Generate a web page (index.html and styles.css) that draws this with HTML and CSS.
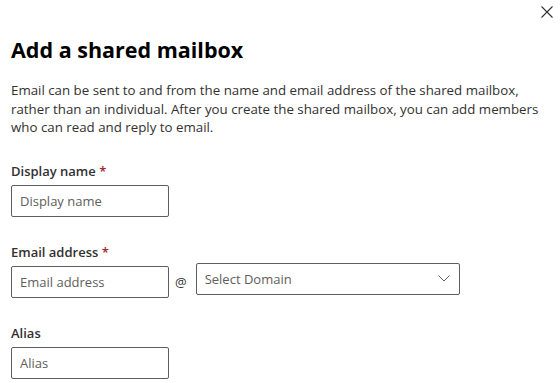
FILE: index.html
```html
<!DOCTYPE html>
<html lang="en">
<head>
<meta charset="utf-8">
<title>Add a shared mailbox</title>
<link rel="stylesheet" href="styles.css">
</head>
<body>
<div class="panel">
  <div class="topbar">
    <button class="close" aria-label="Close">
      <svg width="12" height="12" viewBox="0 0 12 12"><path d="M0.5 0.5 L11.5 11.5 M11.5 0.5 L0.5 11.5" stroke="#323130" stroke-width="1.1" fill="none"/></svg>
    </button>
  </div>
  <h1 class="title">Add a shared mailbox</h1>
  <p class="desc">Email can be sent to and from the name and email address of the shared mailbox, rather than an individual. After you create the shared mailbox, you can add members who can read and reply to email.</p>
  <div class="field">
    <label class="label">Display name <span class="req">*</span></label>
    <input class="input" type="text" placeholder="Display name">
  </div>
  <div class="field">
    <label class="label label-tight">Email address <span class="req">*</span></label>
    <div class="email-row">
      <input class="input email" type="text" placeholder="Email address">
      <span class="at">@</span>
      <div class="select">
        <span class="select-text">Select Domain</span>
        <svg width="12" height="7" viewBox="0 0 12 7"><path d="M0.5 0.5 L6 6 L11.5 0.5" stroke="#605e5c" stroke-width="1" fill="none"/></svg>
      </div>
    </div>
  </div>
  <div class="field">
    <label class="label">Alias</label>
    <input class="input" type="text" placeholder="Alias">
  </div>
</div>
</body>
</html>
```
FILE: styles.css
```css
html, body {
  margin: 0;
  padding: 0;
  background: #ffffff;
}
body {
  font-family: "Open Sans", "Noto Sans", "Liberation Sans", sans-serif;
  color: #323130;
}
.panel {
  padding: 0 11px;
  display: flex;
  flex-direction: column;
}
.topbar {
  display: flex;
  justify-content: flex-end;
  height: 24px;
}
.close {
  margin: 5px -5px 0 0;
  padding: 0;
  width: 14px;
  height: 14px;
  border: 0;
  background: none;
  display: flex;
  align-items: center;
  justify-content: center;
}
.title {
  margin: 12px 0 0 0;
  font-size: 21.5px;
  line-height: 28px;
  font-weight: 700;
  color: #000000;
}
.desc {
  margin: 17px 0 0 0;
  font-size: 13.3px;
  line-height: 18.5px;
  color: #323130;
  max-width: 538px;
}
.field {
  display: flex;
  flex-direction: column;
  margin-top: 24px;
}
.field + .field {
  margin-top: 25px;
}
.label {
  font-size: 13px;
  line-height: 20px;
  font-weight: 600;
  color: #323130;
  margin-bottom: 4px;
}
.label-tight {
  margin-bottom: 1px;
}
.req {
  color: #a4262c;
}
.input {
  box-sizing: border-box;
  width: 158px;
  height: 32px;
  border: 1px solid #605e5c;
  border-radius: 2px;
  padding: 0 8px;
  font-family: inherit;
  font-size: 13px;
  color: #323130;
  background: #fff;
  outline: none;
}
.input::placeholder {
  color: #605e5c;
  opacity: 1;
}
.email-row {
  display: flex;
  align-items: flex-start;
}
.email {
  margin-top: 3px;
}
.at {
  font-size: 13px;
  line-height: 32px;
  margin: 3px 9px 0 6px;
  color: #323130;
}
.select {
  box-sizing: border-box;
  width: 264px;
  height: 32px;
  border: 1px solid #605e5c;
  border-radius: 2px;
  display: flex;
  align-items: center;
  justify-content: space-between;
  padding: 0 9px 0 8px;
}
.select-text {
  font-size: 13px;
  color: #605e5c;
}
```
